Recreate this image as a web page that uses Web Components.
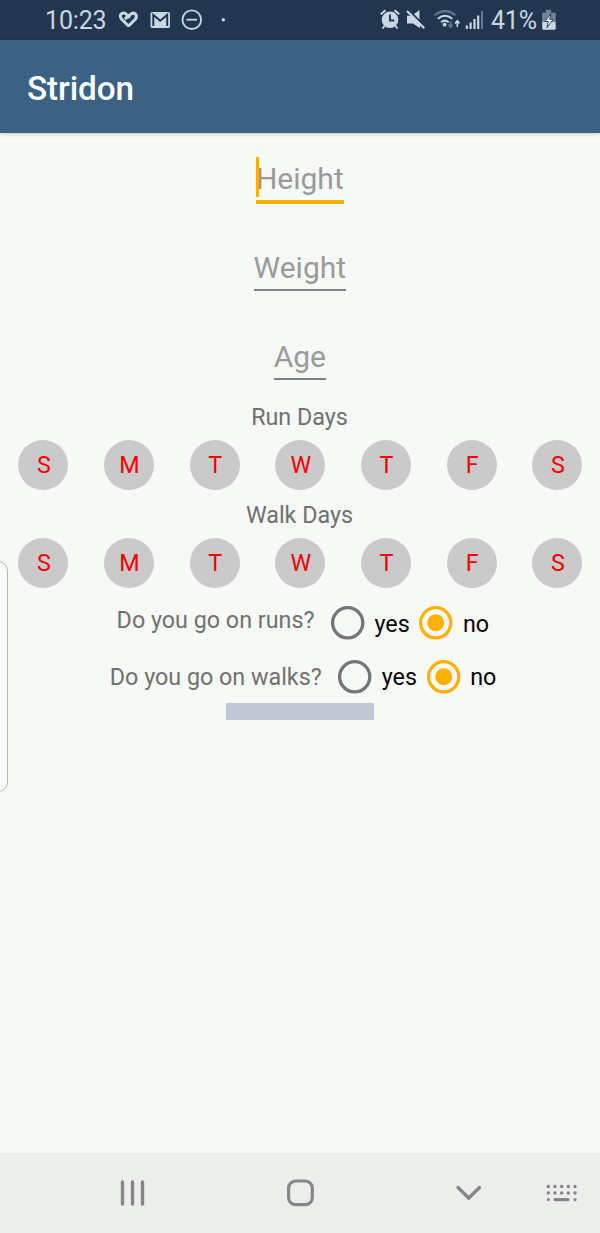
<!DOCTYPE html>
<html lang="en">
<head>
<meta charset="utf-8">
<title>Stridon</title>
<style>
html,body{margin:0;height:100%}
body{font-family:Roboto,"Liberation Sans",sans-serif;background:#f7f9f7;overflow:hidden}
</style>
</head>
<body>
<stridon-app></stridon-app>
<script>
const define = (name, html) => customElements.define(name, class extends HTMLElement {
  constructor() {
    super();
    const t = document.createElement('template');
    t.innerHTML = html;
    this.attachShadow({mode: 'open'}).append(t.content.cloneNode(true));
  }
});

define('status-bar', `
<style>
:host{display:flex;box-sizing:border-box;height:40px;background:#23364f;color:#c9d8e3;align-items:center;justify-content:space-between;padding:0 43px 0 45px;font-size:25px;line-height:42px}
div{display:flex;height:40px}
svg{display:block}
.t{width:61px;white-space:nowrap;letter-spacing:-.15px}
.p{width:48px;white-space:nowrap;letter-spacing:-.2px}
</style>
<div><span class="t">10:23</span>
<svg width="128" height="40" viewBox="106 0 128 40" fill="none" stroke="#c9d8e3">
<path d="M128.500 26L121.500 19Q119 15.500 121.800 13.500Q124.300 12 126.600 14.500L130 17.700M124.800 19L131 14Q134 12.100 135.800 14.500Q137.400 17 135 19.500L128.500 26" stroke-width="3"/>
<rect x="150.500" y="12" width="19.500" height="16" rx="1.800" fill="#c9d8e3" stroke="none"/>
<path d="M153.300 26V15L160.200 20.800L167.200 15V26" stroke="#23364f" stroke-width="2"/>
<circle cx="191.800" cy="19.700" r="9.300" stroke-width="1.800"/><path d="M186.500 19.700h10.600" stroke-width="1.800"/>
<circle cx="223.300" cy="19.700" r="1.700" fill="#c9d8e3" stroke="none"/>
</svg></div>
<div>
<svg width="113" height="40" viewBox="378 0 113 40" fill="none" stroke="#c9d8e3">
<circle cx="390" cy="19.800" r="8.300" fill="#c9d8e3" stroke="none"/>
<path d="M380.800 14.200l4.700-4M399.200 14.200l-4.700-4M384.500 26l-2 2.500M395.500 26l2 2.500" stroke-width="2"/>
<path d="M390 14.500v6h4.300" stroke="#23364f" stroke-width="2"/>
<path d="M407 15.700h4.500L420 25v3.200l-7-4.700h-6zM414 14l5.500-4v9.500z" fill="#c9d8e3" stroke="none"/>
<path d="M407 11l17.300 17.300" stroke-width="2.200"/>
<g stroke-width="2"><path d="M434.500 15.200Q445 7 455.500 15.200" stroke="#65778b"/><path d="M437.800 18.800Q445 12.800 452.300 18.800M441 22.200Q445 19 448.500 22.200"/></g>
<circle cx="444.600" cy="24.700" r="1.900" fill="#c9d8e3" stroke="none"/>
<path d="M450.500 21v6M448.300 24.500l2.200 2.700 2.200-2.700" stroke="#65778b" stroke-width="1.600"/><path d="M457.300 27v-6M455 23.500l2.300-2.800 2.300 2.800" stroke-width="1.600"/>
<path d="M466.800 25.500v3.500M470.600 22.500v6.500M474.500 19v10M478.200 15.500v13.500" stroke-width="2.200"/><path d="M482 11v18" stroke="#65778b" stroke-width="2"/>
</svg><span class="p">41%</span>
<svg width="18" height="40" viewBox="539 0 18 40"><path d="M542.200 12.800h3.500v-3h5.500v3h4.500V22h-13.500z" fill="#71869a"/><path d="M542.200 22h13.500v6.300a1.500 1.500 0 0 1-1.500 1.500h-10.500a1.500 1.500 0 0 1-1.500-1.500z" fill="#c9d8e3"/><path d="M551 13.500l-6 8h3.200l-1.200 6 6.200-8.200h-3.500z" fill="#f5ffff" stroke="#23364f" stroke-width=".9"/></svg>
</div>`);

define('app-bar', `
<style>
:host{display:flex;height:93px;background:#3c6183;color:#f8ffff;align-items:center;padding-left:27px;box-shadow:0 1px 4px #0003;position:relative}
h1{margin:0;font-size:33.3px;font-weight:500;line-height:40px;padding-top:4px;letter-spacing:-.12px}
</style><h1><slot></slot></h1>`);

define('text-field', `
<style>
:host{display:flex;height:89px;box-sizing:border-box;padding-top:28px;justify-content:center;align-items:flex-start}
div{position:relative;left:-.2px;font-size:30px;line-height:36px;color:#999b9a;padding-bottom:3.500px;height:35.500px;border-bottom:2px solid #7f8180}
:host([focused]) div{padding-bottom:3px;height:36px;border-bottom:4px solid #ffb000}
i{display:none;position:absolute;left:0;top:-4px;width:3.500px;height:40px;background:#ffb000}
:host([focused]) i{display:block}
</style><div><slot></slot><i></i></div>`);

define('day-toggle', `
<style>
:host{display:flex;width:50px;height:50px;border-radius:50%;background:#c9cac9;color:#f50000;align-items:center;justify-content:center;font-size:23.300px;line-height:28px}
span{padding-bottom:1px;padding-left:1px}
</style><span><slot></slot></span>`);

define('day-picker', `
<style>
:host{display:block;height:98.300px}
p{margin:0 1px 0 0;text-align:center;font-size:23.300px;line-height:28px;color:#6f7170}
div{display:flex;justify-content:space-between;padding:9.400px 17.500px 0 18.300px}
</style><p><slot></slot></p>
<div><day-toggle>S</day-toggle><day-toggle>M</day-toggle><day-toggle>T</day-toggle><day-toggle>W</day-toggle><day-toggle>T</day-toggle><day-toggle>F</day-toggle><day-toggle>S</day-toggle></div>`);

define('radio-option', `
<style>
:host{display:flex;align-items:center;font-size:23.300px;line-height:28px;color:#050505}
svg{display:block;margin-right:9.500px}
.on{display:none}
:host([checked]) .on{display:block}
:host([checked]) .off{display:none}
span{padding-top:1px}
</style>
<svg width="34" height="34" viewBox="0 0 34 34"><circle class="off" cx="16.700" cy="16.800" r="15.100" fill="none" stroke="#747675" stroke-width="3.300"/><g class="on"><circle cx="16.700" cy="16.800" r="15.100" fill="none" stroke="#ffb000" stroke-width="3.300"/><circle cx="16.700" cy="16.800" r="8.500" fill="#ffb000"/></g></svg>
<span><slot></slot></span>`);

define('yes-no-question', `
<style>
:host{display:flex;height:34px;align-items:center}
label{font-size:23.300px;line-height:28px;color:#6f7170;white-space:nowrap;margin-right:16.500px;padding-bottom:var(--lift,0)}
radio-option + radio-option{margin-left:9.700px}
</style><label><slot></slot></label><radio-option>yes</radio-option><radio-option checked>no</radio-option>`);

define('nav-bar', `
<style>
:host{display:block;height:80px;background:#eceeec}
svg{display:block;width:100%;height:80px;fill:none;stroke:#858786;stroke-linecap:round}
</style>
<svg viewBox="0 1153 600 80">
<path d="M122.500 1182v22M132.500 1182v22M142.500 1182v22" stroke-width="3.400"/>
<rect x="288.600" y="1181" width="23.700" height="23.700" rx="7" stroke-width="3.200"/>
<path d="M458 1187.500L468.700 1198L479.500 1187.500" stroke-width="3.400"/>
<path d="M548.300 1186.500h27M548.300 1193h27" stroke-width="3.500" stroke-dasharray="0 6.670"/>
<path d="M548.300 1199.600h.01M575 1199.600h.01M555 1199.600h13" stroke-width="3.300"/>
</svg>`);

define('edge-handle', `
<style>
:host{position:absolute;left:-13px;top:561px;width:19px;height:229px;border:1px solid #b4b6b5;border-radius:0 10px 10px 0;background:#fafcfa}
</style>`);

define('stridon-app', `
<style>
:host{display:flex;flex-direction:column;width:600px;height:1233px;position:relative;overflow:hidden}
main{flex:1;display:flex;flex-direction:column;background:#f7f9f7}
.days{padding-top:2.700px}
.runs{padding-left:116.600px;margin-top:7px;--lift:6.500px}
.walks{padding-left:109.800px;margin-top:19.400px}
.bar{width:148px;height:17px;background:#c3c9d4;margin:9.300px 0 0 226px}
</style>
<status-bar></status-bar>
<app-bar>Stridon</app-bar>
<main>
<text-field focused>Height</text-field><text-field>Weight</text-field><text-field>Age</text-field>
<div class="days"><day-picker>Run Days</day-picker><day-picker>Walk Days</day-picker></div>
<yes-no-question class="runs">Do you go on runs?</yes-no-question>
<yes-no-question class="walks">Do you go on walks?</yes-no-question>
<div class="bar"></div>
</main>
<nav-bar></nav-bar>
<edge-handle></edge-handle>`);
</script>
</body>
</html>
